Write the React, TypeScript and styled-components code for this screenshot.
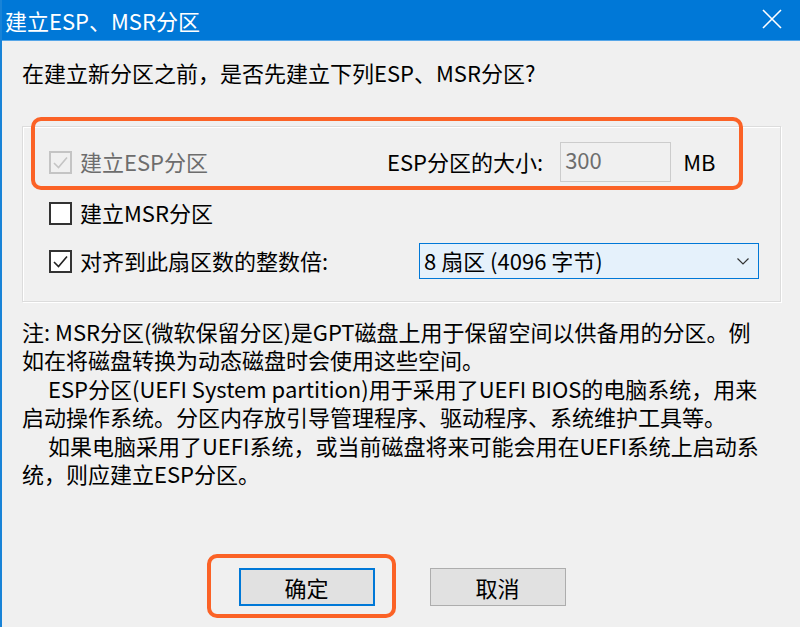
import React from 'react'
import styled, { createGlobalStyle } from 'styled-components'

const GlobalStyle = createGlobalStyle`
  html, body {
    margin: 0;
    padding: 0;
    background: #f0f0f0;
  }
  body {
    font-family: "Noto Sans CJK SC", "Noto Sans", sans-serif;
  }
`

const Window = styled.div`
  position: relative;
  width: 800px;
  height: 627px;
  box-sizing: border-box;
  border-left: 2px solid #1883d7;
  background: #f0f0f0;
  display: flex;
  flex-direction: column;
  overflow: hidden;
  color: #000;
`

const TitleBar = styled.div`
  height: 41px;
  box-sizing: border-box;
  background: #0078d7;
  border-bottom: 1px solid #56a6e8;
  display: flex;
  align-items: center;
  justify-content: space-between;
  padding: 0 18px 0 3px;
  color: #fff;
  font-size: 22px;
  line-height: 28px;
`

const CloseIcon = styled.svg`
  width: 20px;
  height: 20px;
  margin-top: -2px;
`

const Body = styled.div`
  flex: 1;
  display: flex;
  flex-direction: column;
  padding: 0 20px 21px;
  font-size: 22px;
  line-height: 28.5px;
`

const Question = styled.div`
  margin-top: 17px;
  white-space: nowrap;
`

const GroupBox = styled.div`
  margin-top: 39px;
  width: 759px;
  height: 176px;
  box-sizing: border-box;
  border: 1px solid #dcdcdc;
  box-shadow: inset 1px 1px 0 #fff, 1px 1px 0 #fff;
  padding: 15px 0 0 26px;
  display: flex;
  flex-direction: column;
`

const Row = styled.div<{ $h: number; $gap?: number }>`
  height: ${(p) => p.$h}px;
  margin-top: ${(p) => p.$gap ?? 0}px;
  display: flex;
  align-items: center;
`

const CheckItem = styled.label<{ $w?: number; $disabled?: boolean }>`
  width: ${(p) => (p.$w ? `${p.$w}px` : 'auto')};
  flex: none;
  display: flex;
  align-items: center;
  gap: 8px;
  color: ${(p) => (p.$disabled ? '#6d6d6d' : '#000')};
  white-space: nowrap;
`

const Box = styled.span<{ $disabled?: boolean }>`
  width: 23px;
  height: 23px;
  box-sizing: border-box;
  border: 2px solid ${(p) => (p.$disabled ? '#c4c4c4' : '#333')};
  background: ${(p) => (p.$disabled ? '#f0f0f0' : '#fff')};
  display: flex;
  align-items: center;
  justify-content: center;
  margin-top: 1px;
`

const FieldLabel = styled.span`
  white-space: nowrap;
`

const SizeInput = styled.div`
  margin-left: 17px;
  width: 111px;
  height: 40px;
  box-sizing: border-box;
  border: 1px solid #cccccc;
  background: #f0f0f0;
  color: #6d6d6d;
  padding: 2px 0 0 4px;
  line-height: 28px;
  align-self: flex-start;
`

const Unit = styled.span`
  margin-left: 12px;
`

const Select = styled.div`
  width: 340px;
  height: 36px;
  box-sizing: border-box;
  border: 1px solid #0078d7;
  background: #e5f1fb;
  display: flex;
  align-items: center;
  justify-content: space-between;
  padding: 0 8px 0 4px;
  white-space: nowrap;
`

const Chevron = styled.svg`
  width: 14px;
  height: 10px;
`

const Note = styled.div`
  margin-top: 15px;
  display: flex;
  flex-direction: column;
`

const Line = styled.span<{ $indent?: boolean }>`
  white-space: nowrap;
  padding-left: ${(p) => (p.$indent ? 26 : 0)}px;
`

const Footer = styled.div`
  margin-top: auto;
  display: flex;
  justify-content: center;
  gap: 55px;
  padding-left: 2px;
`

const Button = styled.button<{ $primary?: boolean }>`
  width: 136px;
  height: 38px;
  box-sizing: border-box;
  background: #e1e1e1;
  border: ${(p) => (p.$primary ? '2px solid #0078d7' : '1px solid #adadad')};
  font: inherit;
  font-size: 22px;
  line-height: 28px;
  color: #000;
  padding: 0;
`

const Highlight = styled.div<{ $x: number; $y: number; $w: number; $h: number }>`
  position: absolute;
  left: ${(p) => p.$x}px;
  top: ${(p) => p.$y}px;
  width: ${(p) => p.$w}px;
  height: ${(p) => p.$h}px;
  box-sizing: border-box;
  border: 4px solid #fb6226;
  border-radius: 10px;
  pointer-events: none;
`

const Check = ({ disabled }: { disabled?: boolean }) => (
  <svg width="17" height="17" viewBox="0 0 17 17">
    <polyline
      points="2,9 6.5,13.5 15,3.5"
      fill="none"
      stroke={disabled ? '#c4c4c4' : '#222'}
      strokeWidth="1.6"
    />
  </svg>
)

const App = () => (
  <>
    <GlobalStyle />
    <Window>
      <TitleBar>
        <span>建立ESP、MSR分区</span>
        <CloseIcon viewBox="0 0 20 20">
          <path d="M1 1 L19 19 M19 1 L1 19" stroke="#fff" strokeWidth="1.6" fill="none" />
        </CloseIcon>
      </TitleBar>
      <Body>
        <Question>在建立新分区之前，是否先建立下列ESP、MSR分区?</Question>
        <GroupBox>
          <Row $h={40}>
            <CheckItem $w={338} $disabled>
              <Box $disabled>
                <Check disabled />
              </Box>
              建立ESP分区
            </CheckItem>
            <FieldLabel>ESP分区的大小:</FieldLabel>
            <SizeInput>300</SizeInput>
            <Unit>MB</Unit>
          </Row>
          <Row $h={30} $gap={16}>
            <CheckItem>
              <Box />
              建立MSR分区
            </CheckItem>
          </Row>
          <Row $h={36} $gap={15}>
            <CheckItem $w={370}>
              <Box>
                <Check />
              </Box>
              对齐到此扇区数的整数倍:
            </CheckItem>
            <Select>
              <span>8 扇区 (4096 字节)</span>
              <Chevron viewBox="0 0 14 10">
                <polyline points="1.5,2.5 7,8 12.5,2.5" fill="none" stroke="#333" strokeWidth="1.2" />
              </Chevron>
            </Select>
          </Row>
        </GroupBox>
        <Note>
          <Line>注: MSR分区(微软保留分区)是GPT磁盘上用于保留空间以供备用的分区。例</Line>
          <Line>如在将磁盘转换为动态磁盘时会使用这些空间。</Line>
          <Line $indent>ESP分区(UEFI System partition)用于采用了UEFI BIOS的电脑系统，用来</Line>
          <Line>启动操作系统。分区内存放引导管理程序、驱动程序、系统维护工具等。</Line>
          <Line $indent>如果电脑采用了UEFI系统，或当前磁盘将来可能会用在UEFI系统上启动系</Line>
          <Line>统，则应建立ESP分区。</Line>
        </Note>
        <Footer>
          <Button $primary>确定</Button>
          <Button>取消</Button>
        </Footer>
      </Body>
      <Highlight $x={29} $y={117} $w={712} $h={73} />
      <Highlight $x={205} $y={554} $w={189} $h={64} />
    </Window>
  </>
)

export default App
